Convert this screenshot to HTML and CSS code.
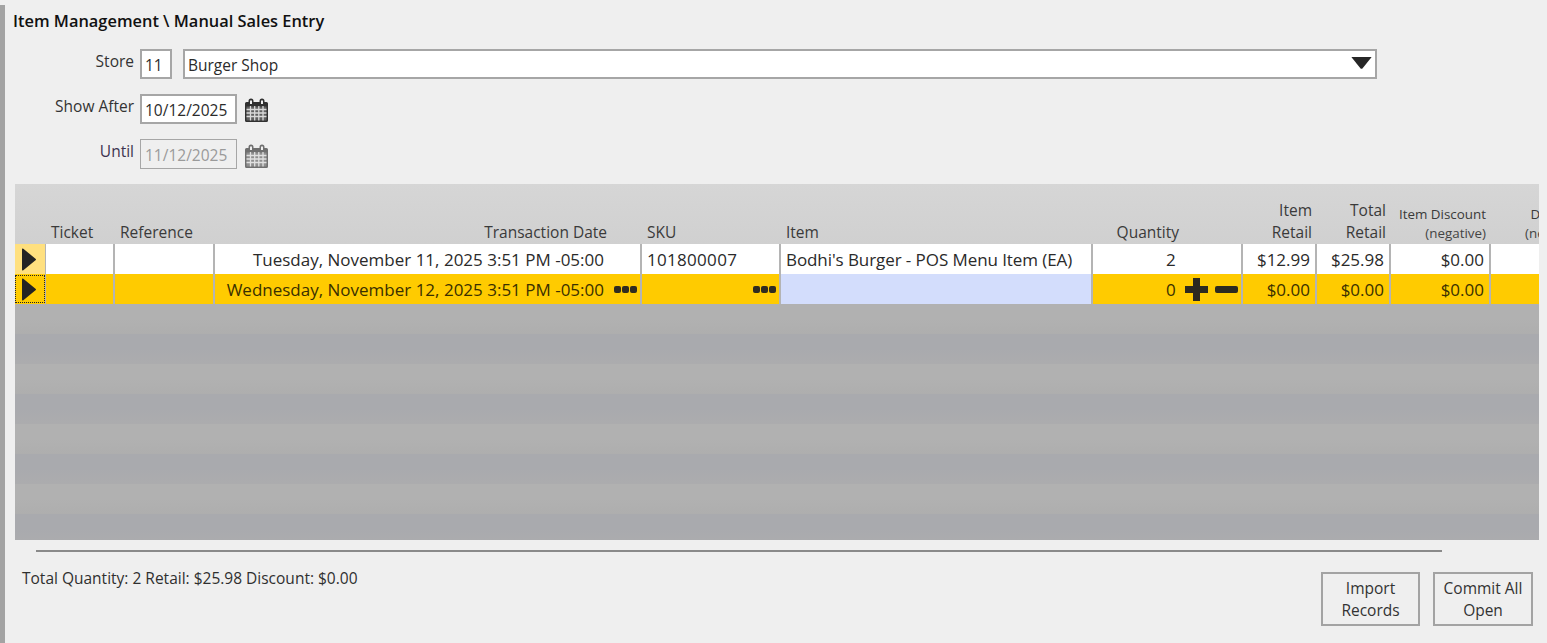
FILE: index.html
```html
<!DOCTYPE html>
<html lang="en">
<head>
<meta charset="utf-8">
<title>Manual Sales Entry</title>
<link rel="stylesheet" href="styles.css">
</head>
<body>
<svg class="defs" width="0" height="0" aria-hidden="true">
  <symbol id="cal" viewBox="0 0 23 24">
    <path d="M0 5.500Q0 4 1.500 4H3.500V3a2.500 2.500 0 0 1 5 0v1h6V3a2.500 2.500 0 0 1 5 0v1h2Q23 4 23 5.500V22.500Q23 24 21.500 24H1.500Q0 24 0 22.500Z" fill="currentColor"/>
    <path d="M5 2.500h2V6H5zM16 2.500h2V6h-2z" fill="#efefef"/>
    <path d="M1.500 8.500h20v14h-20z" fill="#efefef" opacity=".25"/>
    <path d="M1.500 11.500h20M1.500 15h20M1.500 18.500h20M5.500 8v14.500M9.700 8v14.500M13.800 8v14.500M18 8v14.500" stroke="#efefef" stroke-width="1.300" fill="none" opacity=".85"/>
  </symbol>
  <symbol id="arrow" viewBox="0 0 14 23" preserveAspectRatio="none">
    <path d="M0 1.500Q0 0 1.300 .8L13.500 10.700Q14.500 11.500 13.500 12.300L1.300 22.200Q0 23 0 21.500Z" fill="currentColor"/>
  </symbol>
</svg>
<main class="page">
  <h1 class="title">Item Management \ Manual Sales Entry</h1>
  <section class="form">
    <div class="form-row">
      <label class="form-label">Store</label>
      <div class="field field-store">11</div>
      <div class="field field-select">
        <span>Burger Shop</span>
        <svg class="caret" viewBox="0 0 22 13" width="21" height="12"><path d="M0 0H22L12 12.500Q11 13 10 12.500Z" fill="#262626"/></svg>
      </div>
    </div>
    <div class="form-row">
      <label class="form-label">Show After</label>
      <div class="field field-date">10/12/2025</div>
      <svg class="cal"><use href="#cal"/></svg>
    </div>
    <div class="form-row is-disabled">
      <label class="form-label">Until</label>
      <div class="field field-date">11/12/2025</div>
      <svg class="cal"><use href="#cal"/></svg>
    </div>
  </section>

  <section class="grid">
    <div class="row head">
      <div class="c"></div>
      <div class="c left">Ticket</div>
      <div class="c left">Reference</div>
      <div class="c date-head">Transaction Date</div>
      <div class="c left">SKU</div>
      <div class="c left">Item</div>
      <div class="c qty-head">Quantity</div>
      <div class="c">Item<br>Retail</div>
      <div class="c">Total<br>Retail</div>
      <div class="c small">Item Discount<br><span class="sub">(negative)</span></div>
      <div class="c small clip"><span class="clip-text">Discount<br><span class="sub">(negative)</span></span></div>
    </div>
    <div class="row data">
      <div class="c ind ind-light"><svg class="arrow"><use href="#arrow"/></svg></div>
      <div class="c"></div>
      <div class="c"></div>
      <div class="c"><span class="date-val">Tuesday, November 11, 2025 3:51 PM -05:00</span></div>
      <div class="c left sku">101800007</div>
      <div class="c left name">Bodhi's Burger - POS Menu Item (EA)</div>
      <div class="c qty">2</div>
      <div class="c">$12.99</div>
      <div class="c">$25.98</div>
      <div class="c">$0.00</div>
      <div class="c last"></div>
    </div>
    <div class="row data active">
      <div class="c ind"><span class="focus"><svg class="arrow"><use href="#arrow"/></svg></span></div>
      <div class="c"></div>
      <div class="c"></div>
      <div class="c"><span class="date-val">Wednesday, November 12, 2025 3:51 PM -05:00</span><span class="dots"><i></i><i></i><i></i></span></div>
      <div class="c"><span class="dots"><i></i><i></i><i></i></span></div>
      <div class="c edit"></div>
      <div class="c qty"><span>0</span><span class="plus"></span><span class="minus"></span></div>
      <div class="c">$0.00</div>
      <div class="c">$0.00</div>
      <div class="c">$0.00</div>
      <div class="c last"></div>
    </div>
    <div class="bands">
      <div class="band"></div><div class="band alt"></div>
      <div class="band"></div><div class="band alt"></div>
      <div class="band"></div><div class="band alt"></div>
      <div class="band"></div><div class="band alt"></div>
    </div>
  </section>

  <hr class="rule">
  <footer class="foot">
    <p class="totals">Total Quantity: 2 Retail: $25.98 Discount: $0.00</p>
    <div class="actions">
      <button class="btn btn-import" type="button">Import<br>Records</button>
      <button class="btn btn-commit" type="button">Commit All<br>Open</button>
    </div>
  </footer>
</main>
</body>
</html>
```
FILE: styles.css
```css
* { box-sizing: border-box; }
html, body { margin: 0; height: 100%; }
body {
  width: 1547px;
  height: 643px;
  overflow: hidden;
  background: #efefef;
  color: #2b2b2b;
  padding-top: 5px;
  font: 15.5px/20px "Open Sans", "Noto Sans", sans-serif;
}
.defs { display: block; height: 0; }
.page {
  height: 638px;
  border-left: 5px solid #a3a3a3;
  padding: 6px 8px 0 8px;
  display: flex;
  flex-direction: column;
}
.title {
  margin: 0;
  font-size: 16.4px;
  line-height: 20px;
  font-weight: 600;
  color: #111;
}
.form {
  display: flex;
  flex-direction: column;
  gap: 15px;
  margin: 18px 0 0 0;
}
.form-row {
  display: flex;
  align-items: flex-start;
  height: 30px;
}
.form-label {
  width: 121px;
  text-align: right;
  line-height: 24px;
  color: #333;
  flex: none;
}
.field {
  height: 30px;
  margin-left: 6px;
  border: 2px solid #a6a6a6;
  background: #fff;
  padding: 0 3px;
  line-height: 29px;
  flex: none;
  white-space: nowrap;
}
.field-store { width: 32px; }
.field-select {
  width: 1194px;
  margin-left: 11px;
  display: flex;
  justify-content: space-between;
  align-items: center;
  padding: 2px 3px 0;
}
.caret { margin-bottom: 5px; }
.field-date { width: 97px; }
.cal {
  width: 23px;
  height: 24px;
  margin: 4px 0 0 8px;
  color: #303030;
}
.is-disabled .field {
  border: 1px solid #a6a6a6;
  background: #efefef;
  color: #9a9a9a;
  padding-left: 4px;
  line-height: 31px;
}
.is-disabled .form-label { color: #3d3350; }
.is-disabled .cal { color: #6f6f6f; margin-top: 5px; }

.grid {
  margin: 15px 0 0 2px;
  width: 1524px;
  height: 356px;
  overflow: hidden;
  background: #d4d4d4;
  display: flex;
  flex-direction: column;
}
.row {
  display: grid;
  grid-template-columns: 31px 69px 100px 427px 139px 312px 150px 74px 74px 100px 48px;
  flex: none;
}
.head { height: 60px; background: linear-gradient(#d6d6d6, #d0d0d0); }
.head .c {
  display: flex;
  flex-direction: column;
  justify-content: flex-end;
  align-items: flex-end;
  text-align: right;
  padding: 0 5px 1px 5px;
  line-height: 22px;
  color: #3a3a3a;
  white-space: nowrap;
}
.head .left { align-items: flex-start; text-align: left; }
.head .date-head { padding-right: 35px; }
.head .qty-head { padding-right: 64px; }
.head .small { font-size: 13.4px; line-height: 19px; padding-bottom: 1px; }
.sub { color: #444; }
.head .clip { padding: 0 0 1px 34px; align-items: flex-start; overflow: hidden; }
.clip-text { white-space: nowrap; display: block; text-align: right; }
.data { height: 30px; background: #fff; }
.data .c {
  border-right: 2px solid #b4b4b4;
  padding: 0 5px 0 5px;
  line-height: 29px;
  text-align: right;
  white-space: nowrap;
  font-size: 17px;
  display: flex;
  align-items: center;
  justify-content: flex-end;
  color: #2a2a2a;
}
.data .left { justify-content: flex-start; }
.data .last { border-right: 0; }
.data .sku { letter-spacing: .3px; }
.data .name { letter-spacing: -.08px; }
.date-val { margin-right: 33px; }
.data .ind { padding: 0 2px 0 0; border-right-width: 1px; justify-content: center; }
.ind-light { background: #ffe07f; }
.arrow { width: 14px; height: 23px; color: #232323; display: block; }
.focus {
  width: 30px;
  height: 28px;
  margin-right: -2px;
  padding-right: 2px;
  border: 1px dotted #222;
  display: flex;
  align-items: center;
  justify-content: center;
}
.active { background: #ffcb00; }
.active .c { color: #3a3000; }
.active .c:nth-child(4) .date-val { margin-right: 10px; }
.data .c:nth-child(4), .data .c:nth-child(5) { padding-right: 3px; }
.data .edit { background: #d3ddfc; }
.dots { display: flex; gap: 1px; }
.dots i { width: 7px; height: 7px; border-radius: 2px; background: #2f2c20; display: block; }
.data .qty { padding-right: 0; justify-content: flex-start; }
.data .qty > span:first-child { margin-left: 68px; }
.data:not(.active) .qty { padding-left: 73px; }
.plus {
  width: 23px;
  height: 23px;
  margin-left: 9px;
  background:
    linear-gradient(#2c2a20, #2c2a20) center / 23px 7px no-repeat,
    linear-gradient(#2c2a20, #2c2a20) center / 7px 23px no-repeat;
  border-radius: 2px;
}
.minus {
  width: 23px;
  height: 7px;
  margin-left: 7px;
  background: #2c2a20;
  border-radius: 2px;
}
.bands { flex: 1; }
.band { height: 30px; background: linear-gradient(#b1b1b1 50%, #aeaeae); }
.band.alt { background: linear-gradient(#a9aaae 50%, #acacae); }

.rule {
  width: 1406px;
  height: 2px;
  flex: none;
  margin: 10px 0 0 23px;
  border: 0;
  background: #8a8a8a;
}
.foot {
  display: flex;
  justify-content: space-between;
  align-items: flex-start;
  margin-top: 20px;
  padding-left: 9px;
}
.totals { margin: -4px 0 0 0; line-height: 20px; color: #2f2f2f; }
.actions { display: flex; gap: 13px; margin-right: 6px; }
.btn {
  height: 54px;
  border: 2px solid #a3a3a3;
  background: #efefef;
  color: #333;
  font: inherit;
  line-height: 22.5px;
  padding: 0;
  flex: none;
}
.btn-import { width: 99px; }
.btn-commit { width: 100px; }
```
